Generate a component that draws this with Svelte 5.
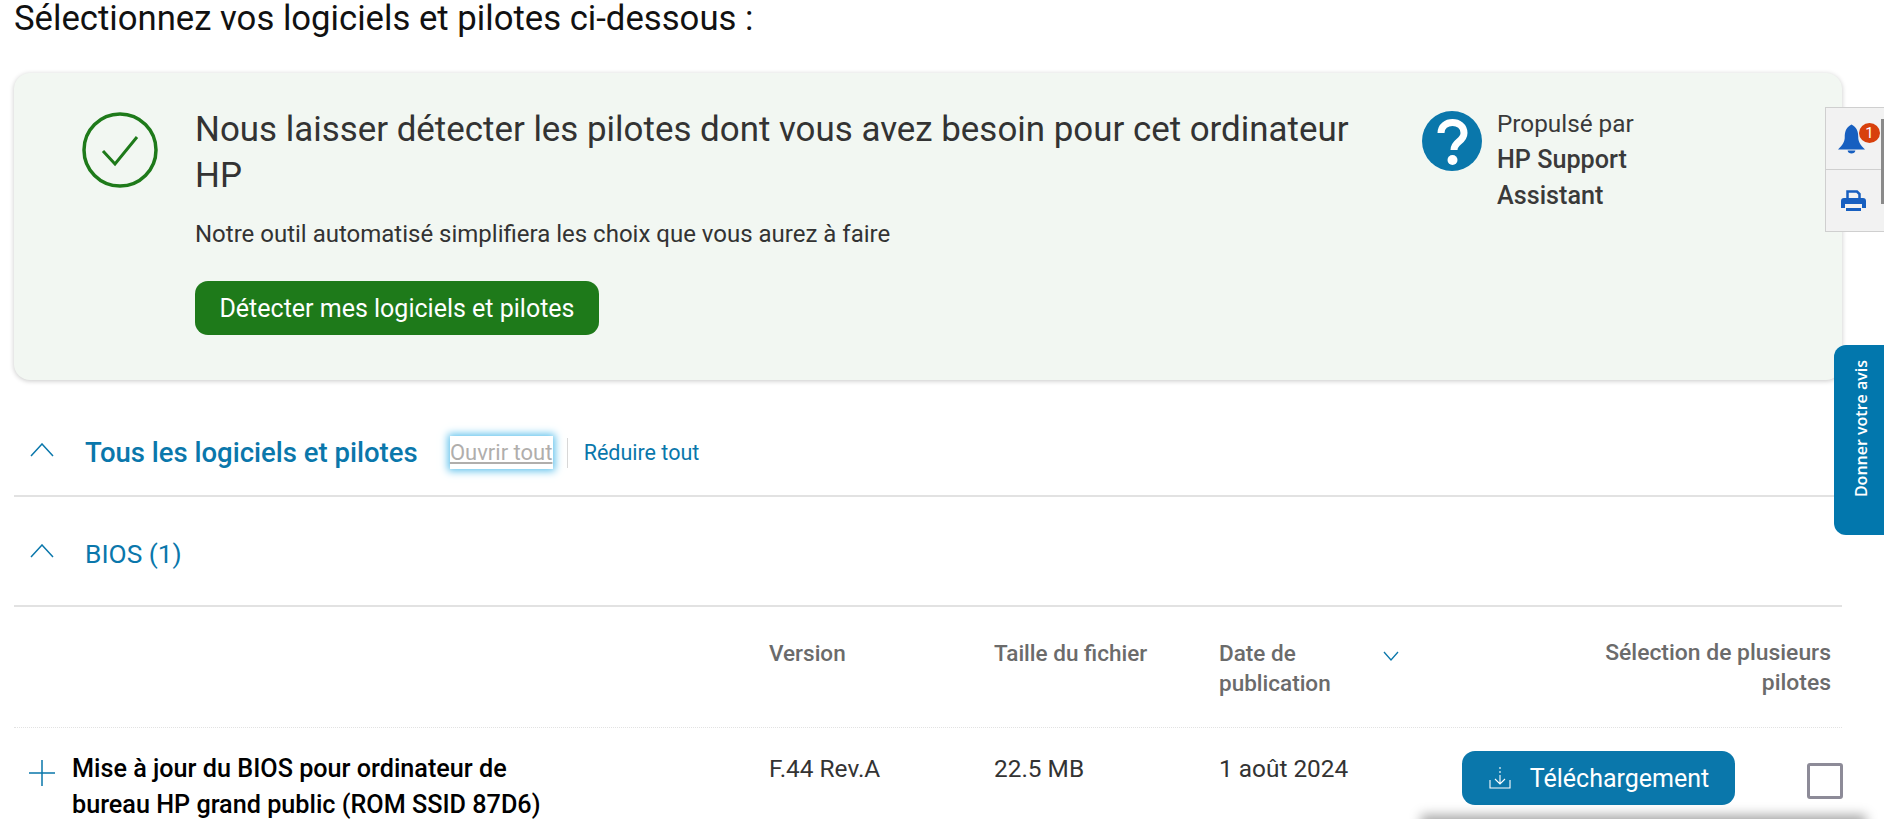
<script lang="ts">
	let sort_open = $state(false);
	let selected = $state(false);
</script>

<div class="page">
	<h2 class="heading">Sélectionnez vos logiciels et pilotes ci-dessous :</h2>

	<section class="detect-card">
		<svg class="check-icon" viewBox="0 0 76 76" aria-hidden="true">
			<circle cx="38" cy="38" r="36" fill="none" stroke="#1e7a1a" stroke-width="3.500" />
			<path d="M21 39 L33 52 L55 25" fill="none" stroke="#1e7a1a" stroke-width="3" />
		</svg>
		<div class="detect-body">
			<h3>Nous laisser détecter les pilotes dont vous avez besoin pour cet ordinateur HP</h3>
			<p>Notre outil automatisé simplifiera les choix que vous aurez à faire</p>
			<button class="detect-btn">Détecter mes logiciels et pilotes</button>
		</div>
		<div class="powered">
			<svg class="help-icon" viewBox="0 0 60 60" aria-hidden="true">
				<circle cx="30" cy="30" r="30" fill="#0a77ab" />
				<path d="M19 22 C19 8 42 8 42 22 C42 31 32 30 32 39" fill="none" stroke="#fff" stroke-width="7" />
				<circle cx="30.500" cy="49" r="5" fill="#fff" />
			</svg>
			<div class="powered-text">
				<span>Propulsé par</span>
				<strong>HP Support Assistant</strong>
			</div>
		</div>
	</section>

	<div class="all-row">
		<svg class="chev" viewBox="0 0 24 14" aria-hidden="true"><path d="M1 13 L12 1 L23 13" /></svg>
		<span class="all-title">Tous les logiciels et pilotes</span>
		<button class="link focused">Ouvrir tout</button>
		<span class="divider"></span>
		<button class="link">Réduire tout</button>
	</div>

	<div class="bios-row">
		<svg class="chev" viewBox="0 0 24 14" aria-hidden="true"><path d="M1 13 L12 1 L23 13" /></svg>
		<span class="bios-title">BIOS (1)</span>
	</div>

	<div class="table-grid table-head">
		<div></div>
		<div>Version</div>
		<div>Taille du fichier</div>
		<div class="date-head">
			<span>Date de publication</span>
			<button class="sort" aria-label="Trier" onclick={() => (sort_open = !sort_open)}>
				<svg viewBox="0 0 16 10" aria-hidden="true"><path d="M1 1 L8 9 L15 1" /></svg>
			</button>
		</div>
		<div class="multi-head">Sélection de plusieurs pilotes</div>
	</div>

	<div class="table-grid table-row">
		<div class="name-cell">
			<svg class="plus" viewBox="0 0 26 26" aria-hidden="true"><path d="M13 0 V26 M0 13 H26" /></svg>
			<strong>Mise à jour du BIOS pour ordinateur de bureau HP grand public (ROM SSID 87D6)</strong>
		</div>
		<div>F.44 Rev.A</div>
		<div>22.5 MB</div>
		<div>1 août 2024</div>
		<div class="action-cell">
			<button class="download-btn">
				<svg viewBox="0 0 24 24" aria-hidden="true">
					<path d="M12 1 V3 M12 5 V7 M12 9 V18 M7 13 L12 18 L17 13 M2 14 V22 H22 V14" />
				</svg>
				Téléchargement
			</button>
			<button class="checkbox" class:on={selected} aria-label="Sélectionner" onclick={() => (selected = !selected)}></button>
		</div>
	</div>
</div>

<div class="side-tools">
	<button class="tool">
		<svg class="bell" viewBox="0 0 28 30" aria-hidden="true">
			<path d="M14 0 C8 3 7 8 7 13 C7 18 5 21 0 26 H28 C23 21 21 18 21 13 C21 8 20 3 14 0 Z M10 27 C10 31 18 31 18 27 Z" fill="#175fc0" />
		</svg>
		<span class="badge">1</span>
	</button>
	<button class="tool">
		<svg class="printer" viewBox="0 0 25 21" aria-hidden="true">
			<path d="M6.500 9 V1.500 H16 L18.500 4 V9" fill="none" stroke="#175fc0" stroke-width="2.500" />
			<path d="M3 8 H22 Q25 8 25 11 V18 H21 V14 H4 V18 H0 V11 Q0 8 3 8 Z" fill="#175fc0" />
			<path d="M5 19.500 H20" stroke="#175fc0" stroke-width="3" />
		</svg>
	</button>
	<span class="scroll-thumb"></span>
</div>

<button class="feedback"><span>Donner votre avis</span></button>
<div class="bottom-shadow"></div>

<style>
	:global(body) {
		margin: 0;
		background: #fff;
		font-family: Roboto, 'Noto Sans', sans-serif;
		overflow: hidden;
	}

	button {
		font-family: inherit;
		cursor: pointer;
	}

	.page {
		padding: 0 42px 0 14px;
		height: 819px;
		box-sizing: border-box;
	}

	.heading {
		margin: 0;
		font-size: 34.700px;
		line-height: 36px;
		font-weight: 400;
		color: #111;
	}

	.detect-card {
		margin-top: 37px;
		height: 307px;
		box-sizing: border-box;
		background: #f2f7f2;
		border-radius: 16px;
		box-shadow: 0 1px 5px rgba(0, 0, 0, 0.22);
		display: flex;
		padding: 39px 0 0 68px;
	}

	.check-icon {
		width: 76px;
		height: 76px;
		flex: none;
	}

	.detect-body {
		width: 1180px;
		margin-left: 37px;
		flex: none;
	}

	.detect-body h3 {
		margin: -5px 0 0;
		font-size: 34.900px;
		line-height: 46px;
		font-weight: 400;
		color: #333;
	}

	.detect-body p {
		margin: 20px 0 0;
		font-size: 24px;
		line-height: 30px;
		color: #333;
	}

	.detect-btn {
		margin-top: 32px;
		display: block;
		height: 54px;
		width: 404px;
		border: none;
		border-radius: 13px;
		background: #1e7a1a;
		color: #fff;
		font-size: 25px;
	}

	.powered {
		display: flex;
		gap: 15px;
		margin-left: 47px;
		flex: none;
		align-items: flex-start;
	}

	.help-icon {
		width: 60px;
		height: 60px;
		margin-top: -1px;
		flex: none;
	}

	.powered-text {
		width: 160px;
		font-size: 24.300px;
		line-height: 36px;
		color: #3a3a3a;
		margin-top: -6px;
	}

	.powered-text span,
	.powered-text strong {
		display: block;
	}

	.powered-text strong {
		font-weight: 500;
		font-size: 25.200px;
		line-height: 35.500px;
	}

	.all-row {
		display: flex;
		align-items: center;
		height: 117px;
		padding-top: 30px;
		box-sizing: border-box;
		border-bottom: 2px solid #e2e2e2;
	}

	.chev {
		width: 24px;
		height: 14px;
		margin: -6px 0 0 16px;
		flex: none;
	}

	.chev path {
		fill: none;
		stroke: #0a77ab;
		stroke-width: 1.500;
	}

	.all-title {
		margin-left: 31px;
		font-size: 27.500px;
		font-weight: 500;
		color: #0a77ab;
		white-space: nowrap;
	}

	.link {
		border: none;
		background: none;
		padding: 0;
		font-size: 21.500px;
		color: #0a77ab;
		white-space: nowrap;
	}

	.focused {
		margin-left: 32px;
		height: 33px;
		width: 103px;
		background: #fff;
		color: #b0aeac;
		font-size: 22px;
		text-decoration: underline;
		box-shadow: 0 0 8px 2px #5cc0ec;
	}

	.divider {
		width: 1px;
		height: 30px;
		margin: 0 16px 0 14px;
		background: #d8d8d8;
	}

	.bios-row {
		display: flex;
		align-items: center;
		height: 110px;
		padding-top: 6px;
		box-sizing: border-box;
		border-bottom: 2px solid #e2e2e2;
	}

	.bios-title {
		margin-left: 31px;
		font-size: 26.300px;
		color: #0a77ab;
	}

	.table-grid {
		display: grid;
		grid-template-columns: 755px 225px 225px 240px 1fr;
	}

	.table-head {
		height: 121px;
		box-sizing: border-box;
		padding-top: 31px;
		border-bottom: 1px dotted #e2e2e2;
		font-size: 22.500px;
		line-height: 30px;
		font-weight: 500;
		color: #6b6b6b;
	}

	.date-head {
		display: flex;
	}

	.date-head span {
		width: 150px;
	}

	.sort {
		border: none;
		background: none;
		padding: 0;
		margin-left: 14px;
		width: 16px;
		height: 30px;
	}

	.sort svg {
		width: 16px;
		height: 10px;
		margin-top: 5px;
		fill: none;
		stroke: #0a77ab;
		stroke-width: 1.300;
		display: block;
	}

	.multi-head {
		text-align: right;
		font-size: 22.900px;
		padding-right: 11px;
		padding-left: 100px;
	}

	.table-row {
		padding-top: 23px;
		font-size: 24.400px;
		line-height: 36px;
		color: #333;
	}

	.name-cell {
		display: flex;
		gap: 17px;
		padding-left: 15px;
		width: 540px;
	}

	.name-cell strong {
		color: #000;
		font-weight: 500;
		font-size: 25.200px;
	}

	.plus {
		width: 26px;
		height: 26px;
		margin-top: 9px;
		flex: none;
		fill: none;
		stroke: #0a77ab;
		stroke-width: 1.500;
	}

	.action-cell {
		display: flex;
		align-items: flex-start;
	}

	.download-btn {
		margin: 0 0 0 3px;
		height: 54px;
		width: 273px;
		flex: none;
		border: none;
		border-radius: 13px;
		background: #0a77ab;
		color: #fff;
		font-size: 25px;
		display: flex;
		align-items: center;
		justify-content: center;
		gap: 18px;
	}

	.download-btn svg {
		width: 24px;
		height: 24px;
		fill: none;
		stroke: #fff;
		stroke-width: 1.100;
	}

	.checkbox {
		width: 36px;
		height: 36px;
		margin: 12px 0 0 72px;
		border: 3px solid #8d8b98;
		border-radius: 3px;
		background: #fff;
		padding: 0;
		flex: none;
	}

	.side-tools {
		position: fixed;
		left: 1825px;
		top: 107px;
		width: 59px;
		height: 125px;
		box-sizing: border-box;
		border: 1px solid #cfcfcf;
		border-right: none;
		background: #f2f2f2;
	}

	.tool {
		position: relative;
		display: flex;
		align-items: center;
		justify-content: center;
		width: 100%;
		height: 61px;
		padding: 0 7px 0 0;
		border: none;
		background: none;
	}

	.tool + .tool {
		border-top: 1px solid #cfcfcf;
		height: 62px;
	}

	.bell {
		width: 27px;
		height: 30px;
	}

	.printer {
		width: 25px;
		height: 21px;
		margin-left: 3px;
	}

	.badge {
		position: absolute;
		left: 33px;
		top: 15px;
		width: 21px;
		height: 20px;
		border-radius: 50%;
		background: #d8400c;
		color: #fff;
		font-size: 15px;
		line-height: 20px;
		text-align: center;
	}

	.scroll-thumb {
		position: absolute;
		right: 0;
		top: 11px;
		width: 3px;
		height: 85px;
		background: #8a8a8a;
	}

	.feedback {
		position: fixed;
		left: 1834px;
		top: 345px;
		width: 50px;
		height: 190px;
		box-sizing: border-box;
		padding: 15px 0 0 3px;
		border: none;
		border-radius: 12px 0 0 12px;
		background: #0277ad;
		color: #fff;
		display: flex;
		justify-content: center;
		align-items: flex-start;
	}

	.feedback span {
		display: block;
		writing-mode: vertical-rl;
		transform: rotate(180deg);
		font-family: 'Open Sans', sans-serif;
		font-size: 16px;
		font-weight: 600;
	}

	.bottom-shadow {
		position: fixed;
		left: 1425px;
		right: 22px;
		bottom: -20px;
		height: 20px;
		box-shadow: 0 0 12px 4px rgba(0, 0, 0, 0.35);
	}
</style>
